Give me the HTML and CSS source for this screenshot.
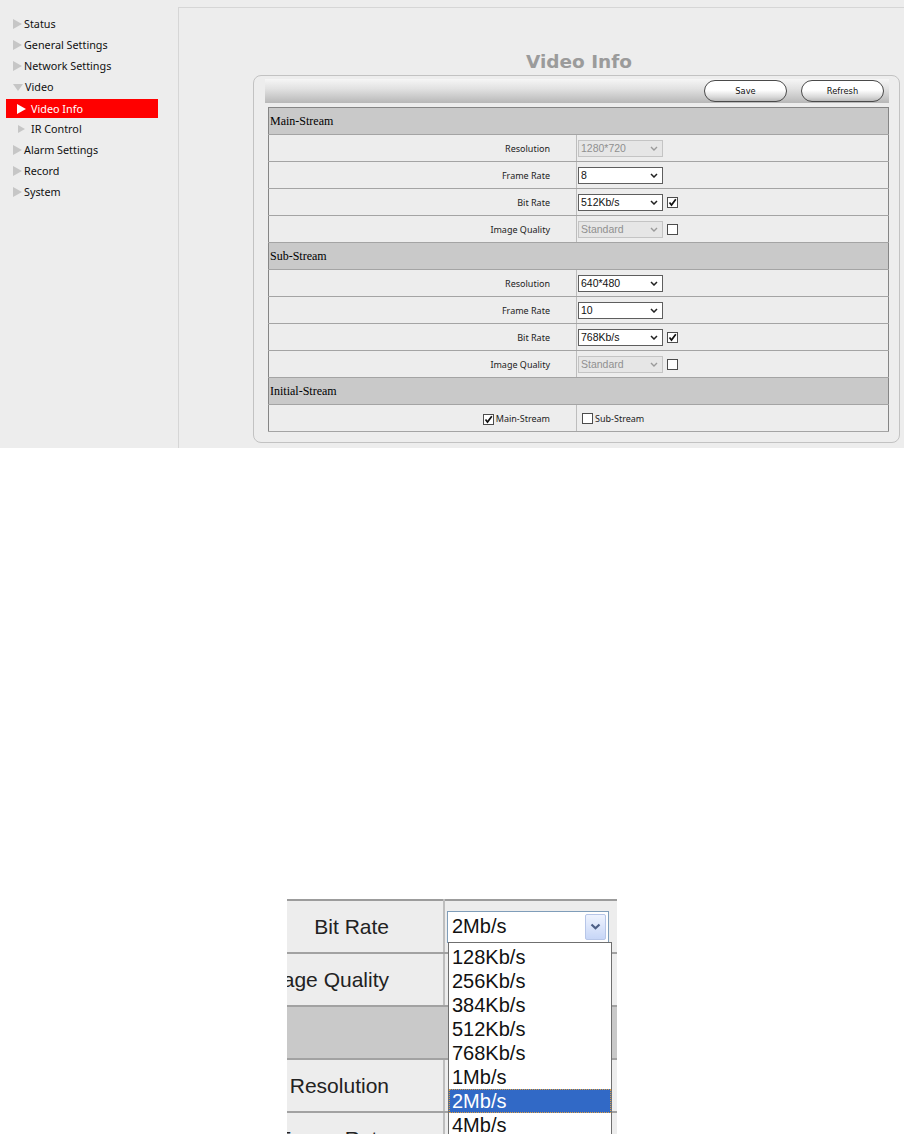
FILE: index.html
```html
<!DOCTYPE html>
<html>
<head>
    <title>Video Info</title>
    <link rel="stylesheet" href="styles.css">
</head>
<body>
    <div class="screen">
        <div class="sidebar">
            <ul class="menu">
                <li class="item"><span class="arrow"></span>Status</li>
                <li class="item"><span class="arrow"></span>General Settings</li>
                <li class="item"><span class="arrow"></span>Network Settings</li>
                <li class="item"><span class="arrow down"></span>Video</li>
                <li class="item sub active"><span class="arrow"></span>Video Info</li>
                <li class="item sub"><span class="arrow"></span>IR Control</li>
                <li class="item"><span class="arrow"></span>Alarm Settings</li>
                <li class="item"><span class="arrow"></span>Record</li>
                <li class="item"><span class="arrow"></span>System</li>
            </ul>
        </div>

        <div class="content">
            <h2 class="page-title">Video Info</h2>
            <div class="panel">
                <div class="toolbar">
                    <button class="btn">Save</button>
                    <button class="btn">Refresh</button>
                </div>
                <table class="settings">
                    <tr class="section"><td colspan="2">Main-Stream</td></tr>
                    <tr>
                        <td class="label">Resolution</td>
                        <td class="value"><div class="field"><div class="select disabled"><span>1280*720</span><svg width="8" height="5" viewBox="0 0 8 5"><path d="M1 1 L4 4 L7 1" fill="none" stroke="#9a9a9a" stroke-width="1.4"/></svg></div></div></td>
                    </tr>
                    <tr>
                        <td class="label">Frame Rate</td>
                        <td class="value"><div class="field"><div class="select"><span>8</span><svg width="8" height="5" viewBox="0 0 8 5"><path d="M1 1 L4 4 L7 1" fill="none" stroke="#222" stroke-width="1.5"/></svg></div></div></td>
                    </tr>
                    <tr>
                        <td class="label">Bit Rate</td>
                        <td class="value"><div class="field"><div class="select"><span>512Kb/s</span><svg width="8" height="5" viewBox="0 0 8 5"><path d="M1 1 L4 4 L7 1" fill="none" stroke="#222" stroke-width="1.5"/></svg></div><span class="check"><svg width="9" height="9" viewBox="0 0 9 9"><path d="M1.5 4.5 L3.5 7 L7.8 1.2" fill="none" stroke="#111" stroke-width="1.7"/></svg></span></div></td>
                    </tr>
                    <tr>
                        <td class="label">Image Quality</td>
                        <td class="value"><div class="field"><div class="select disabled"><span>Standard</span><svg width="8" height="5" viewBox="0 0 8 5"><path d="M1 1 L4 4 L7 1" fill="none" stroke="#9a9a9a" stroke-width="1.4"/></svg></div><span class="check"></span></div></td>
                    </tr>
                    <tr class="section"><td colspan="2">Sub-Stream</td></tr>
                    <tr>
                        <td class="label">Resolution</td>
                        <td class="value"><div class="field"><div class="select"><span>640*480</span><svg width="8" height="5" viewBox="0 0 8 5"><path d="M1 1 L4 4 L7 1" fill="none" stroke="#222" stroke-width="1.5"/></svg></div></div></td>
                    </tr>
                    <tr>
                        <td class="label">Frame Rate</td>
                        <td class="value"><div class="field"><div class="select"><span>10</span><svg width="8" height="5" viewBox="0 0 8 5"><path d="M1 1 L4 4 L7 1" fill="none" stroke="#222" stroke-width="1.5"/></svg></div></div></td>
                    </tr>
                    <tr>
                        <td class="label">Bit Rate</td>
                        <td class="value"><div class="field"><div class="select"><span>768Kb/s</span><svg width="8" height="5" viewBox="0 0 8 5"><path d="M1 1 L4 4 L7 1" fill="none" stroke="#222" stroke-width="1.5"/></svg></div><span class="check"><svg width="9" height="9" viewBox="0 0 9 9"><path d="M1.5 4.5 L3.5 7 L7.8 1.2" fill="none" stroke="#111" stroke-width="1.7"/></svg></span></div></td>
                    </tr>
                    <tr>
                        <td class="label">Image Quality</td>
                        <td class="value"><div class="field"><div class="select disabled"><span>Standard</span><svg width="8" height="5" viewBox="0 0 8 5"><path d="M1 1 L4 4 L7 1" fill="none" stroke="#9a9a9a" stroke-width="1.4"/></svg></div><span class="check"></span></div></td>
                    </tr>
                    <tr class="section"><td colspan="2">Initial-Stream</td></tr>
                    <tr>
                        <td class="label"><span class="check"><svg width="9" height="9" viewBox="0 0 9 9"><path d="M1.5 4.5 L3.5 7 L7.8 1.2" fill="none" stroke="#111" stroke-width="1.7"/></svg></span>Main-Stream</td>
                        <td class="value"><div class="field option"><span class="check"></span>Sub-Stream</div></td>
                    </tr>
                </table>
            </div>
        </div>
    </div>

    <div class="zoom-crop">
        <table class="zoom-table">
            <tr>
                <td class="zlabel">Bit Rate</td>
                <td class="zvalue">
                    <div class="combo">
                        <span>2Mb/s</span>
                        <span class="combo-btn"><svg width="11" height="7" viewBox="0 0 11 7"><path d="M1.5 1.5 L5.5 5.3 L9.5 1.5" fill="none" stroke="#4d5f86" stroke-width="2.2"/></svg></span>
                    </div>
                </td>
            </tr>
            <tr><td class="zlabel">Image Quality</td><td class="zvalue"></td></tr>
            <tr class="zsection"><td colspan="2"></td></tr>
            <tr><td class="zlabel">Resolution</td><td class="zvalue"></td></tr>
            <tr><td class="zlabel">Frame Rate</td><td class="zvalue"></td></tr>
        </table>
        <ul class="droplist">
            <li>128Kb/s</li>
            <li>256Kb/s</li>
            <li>384Kb/s</li>
            <li>512Kb/s</li>
            <li>768Kb/s</li>
            <li>1Mb/s</li>
            <li class="selected">2Mb/s</li>
            <li>4Mb/s</li>
            <li>6Mb/s</li>
        </ul>
    </div>
</body>
</html>
```

FILE: styles.css
```css
body {
    margin: 0;
    background: #fff;
    font-family: "Noto Sans", sans-serif;
}
.screen {
    display: flex;
    height: 448px;
    background: #ededed;
    overflow: hidden;
}

/* left menu */
.sidebar {
    width: 178px;
    flex-shrink: 0;
}
.menu {
    list-style: none;
    margin: 0;
    padding: 14px 0 0 0;
}
.item {
    display: flex;
    align-items: center;
    height: 19px;
    margin: 0 0 2px 0;
    padding-left: 13px;
    font-size: 10.8px;
    color: #111;
}
.arrow {
    width: 0;
    height: 0;
    border-left: 9px solid #c6c6c6;
    border-top: 5px solid transparent;
    border-bottom: 5px solid transparent;
    margin-right: 2px;
}
.arrow.down {
    border-left: 5px solid transparent;
    border-right: 5px solid transparent;
    border-top: 7px solid #c6c6c6;
    border-bottom: 0;
    margin-top: 2px;
}
.item.sub {
    margin-left: 6px;
    width: 152px;
    padding-left: 12px;
    box-sizing: border-box;
}
.item.sub .arrow {
    border-left-width: 7px;
    border-top-width: 4.5px;
    border-bottom-width: 4.5px;
    margin-right: 6px;
}
.item.active {
    background: #ff0000;
    color: #fff;
    padding-left: 11px;
    transform: translateY(1px);
}
.item.active .arrow {
    border-left: 9px solid #fff;
    border-top-width: 5.5px;
    border-bottom-width: 5.5px;
    margin-right: 5px;
}

/* content frame */
.content {
    flex: 1;
    margin-top: 7px;
    border-top: 1px solid #d6d6d6;
    border-left: 1px solid #d6d6d6;
}
.page-title {
    margin: 43px 4px 2px 74px;
    padding-left: 5px;
    height: 22px;
    line-height: 22px;
    text-align: center;
    font-family: "DejaVu Sans", sans-serif;
    font-size: 18.5px;
    font-weight: bold;
    color: #9b9b9b;
}
.panel {
    margin: 0 4px 0 74px;
    padding: 3px 10px 10px 11px;
    border: 1px solid #c2c2c2;
    border-radius: 8px;
}
.toolbar {
    display: flex;
    justify-content: flex-end;
    align-items: center;
    gap: 14px;
    height: 24px;
    padding-right: 5px;
    background: linear-gradient(#f6f6f6, #e2e2e2 40%, #b8b8b8);
}
.btn {
    width: 83px;
    height: 22px;
    padding: 0;
    border: 1px solid #4a4a4a;
    border-radius: 11px;
    background: linear-gradient(#ffffff, #ffffff 45%, #d9d9d9 80%, #b9b9b9);
    font-family: "DejaVu Sans", sans-serif;
    font-size: 8.3px;
    color: #111;
}

/* settings table */
.settings {
    width: calc(100% - 3px);
    margin: 4px 0 0 3px;
    border-collapse: collapse;
    border: 1px solid #858585;
}
.settings td {
    height: 26px;
    padding: 0;
    border-bottom: 1px solid #a4a4a4;
}
.settings .section td {
    background: #c9c9c9;
    padding-left: 1px;
    font-family: "Liberation Serif", serif;
    font-size: 12px;
    color: #000;
}
.label {
    width: 281px;
    padding-right: 26px !important;
    border-right: 1px solid #bdbdbd;
    text-align: right;
    font-size: 9px;
    color: #222;
}
.label .check {
    display: inline-flex;
    vertical-align: -2px;
    margin-right: 2px;
}
.value {
    padding-left: 1px !important;
}
.field {
    display: flex;
    align-items: center;
    gap: 4px;
}
.field.option {
    gap: 2px;
    padding-left: 4px;
    font-size: 9px;
    color: #222;
}
.select {
    display: flex;
    align-items: center;
    justify-content: space-between;
    box-sizing: border-box;
    width: 85px;
    height: 17px;
    padding: 0 4px 0 2px;
    border: 1px solid #5e5e5e;
    background: #fff;
    font-family: "Liberation Sans", sans-serif;
    font-size: 10.5px;
    color: #111;
}
.select.disabled {
    border-color: #c4c4c4;
    background: #e6e6e6;
    color: #909090;
}
.check {
    display: inline-flex;
    align-items: center;
    justify-content: center;
    box-sizing: border-box;
    width: 11px;
    height: 11px;
    border: 1px solid #4c4c4c;
    background: #fff;
}

/* magnified dropdown crop */
.zoom-crop {
    position: relative;
    width: 330px;
    height: 236px;
    margin: 450px 0 0 287px;
    overflow: hidden;
    background: #fff;
}
.zoom-table {
    margin: 1px 0 0 -120px;
    width: 460px;
    border-collapse: collapse;
    border-top: 2px solid #9c9c9c;
}
.zoom-table td {
    height: 51px;
    padding: 0;
    background: #ededed;
    border-bottom: 2px solid #a2a2a2;
    font-family: "Liberation Sans", sans-serif;
    font-size: 21px;
    color: #222;
}
.zoom-table .zlabel {
    width: 222px;
    padding-right: 54px;
    border-right: 2px solid #bebebe;
    text-align: right;
    white-space: nowrap;
}
.zoom-table .zvalue {
    padding-left: 2px;
}
.zoom-table .zsection td {
    background: #c9c9c9;
}
.combo {
    display: flex;
    align-items: center;
    justify-content: space-between;
    box-sizing: border-box;
    width: 162px;
    height: 32px;
    padding: 0 2px 0 4px;
    border: 1px solid #7f9db9;
    background: #fff;
    font-size: 20px;
    color: #111;
}
.combo-btn {
    display: flex;
    align-items: center;
    justify-content: center;
    box-sizing: border-box;
    width: 21px;
    height: 26px;
    border: 1px solid #b7c6e8;
    border-radius: 2px;
    background: linear-gradient(#eef3fe, #c7d6f7);
}
.droplist {
    position: absolute;
    left: 161px;
    top: 44px;
    width: 164px;
    margin: 0;
    padding: 2px 0 0 0;
    list-style: none;
    box-sizing: border-box;
    border: 1px solid #6f6f6f;
    background: #fff;
    font-family: "Liberation Sans", sans-serif;
    font-size: 20px;
    color: #111;
}
.droplist li {
    height: 24px;
    line-height: 24px;
    padding-left: 3px;
}
.droplist li.selected {
    background: #3169c6;
    color: #fff;
    outline: 1px dotted #e0a040;
    outline-offset: -1px;
}
```
